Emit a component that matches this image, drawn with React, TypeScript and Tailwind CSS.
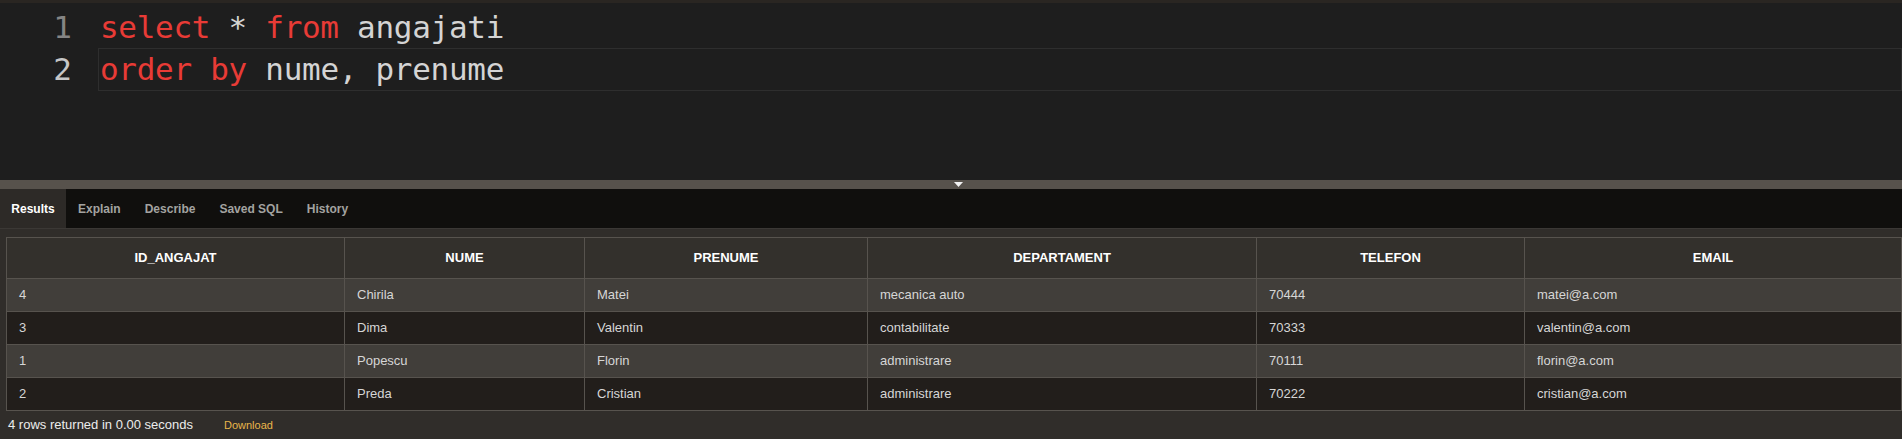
import React from "react";

const cols = [
  { name: "ID_ANGAJAT", w: 338 },
  { name: "NUME", w: 240 },
  { name: "PRENUME", w: 283 },
  { name: "DEPARTAMENT", w: 389 },
  { name: "TELEFON", w: 268 },
  { name: "EMAIL", w: 377 },
];

const rows = [
  ["4", "Chirila", "Matei", "mecanica auto", "70444", "matei@a.com"],
  ["3", "Dima", "Valentin", "contabilitate", "70333", "valentin@a.com"],
  ["1", "Popescu", "Florin", "administrare", "70111", "florin@a.com"],
  ["2", "Preda", "Cristian", "administrare", "70222", "cristian@a.com"],
];

const mono = { fontFamily: '"DejaVu Sans Mono", monospace' };
const sans = { fontFamily: '"Liberation Sans", Arial, sans-serif' };

export default function App() {
  return (
    <div className="w-[1902px] h-[439px] overflow-hidden bg-[#302d2a] flex flex-col" style={sans}>
      {/* Editor */}
      <div className="h-[180px] bg-[#1e1e1e] border-t-[3px] border-[#2a2622] pt-[3px] flex flex-col" style={mono}>
        <div className="h-[42px] flex items-center">
          <div className="w-[98px] pr-[26px] text-right text-[31px] text-[#858585]">1</div>
          <div className="flex-1 text-[31px] tracking-[-0.3px] whitespace-pre pl-[2px]">
            <span className="text-[#e83b36]">select</span>
            <span className="text-[#d4d4d4]"> * </span>
            <span className="text-[#e83b36]">from</span>
            <span className="text-[#d4d4d4]"> angajati</span>
          </div>
        </div>
        <div className="h-[43px] flex items-center">
          <div className="w-[98px] pr-[26px] text-right text-[31px] text-[#c6c6c6]">2</div>
          <div className="flex-1 h-full flex items-center border border-[#2e2e2e] text-[31px] tracking-[-0.3px] whitespace-pre pl-[1px]">
            <span className="text-[#e83b36]">order by</span>
            <span className="text-[#d4d4d4]"> nume, prenume</span>
          </div>
        </div>
      </div>

      {/* Divider */}
      <div className="h-[9px] bg-[#57524c] flex items-center justify-center pl-[14px]">
        <svg width="9" height="5" viewBox="0 0 9 5">
          <path d="M0 0 H9 L4.5 5 Z" fill="#f2f2f2" />
        </svg>
      </div>

      {/* Tabs */}
      <div className="h-[40px] bg-[#100f0d] border-b border-[#3b3835] flex text-[12px] font-bold">
        <div className="w-[66px] bg-[#2d2a27] text-white flex items-center justify-center">Results</div>
        {["Explain", "Describe", "Saved SQL", "History"].map((t) => (
          <div key={t} className="px-[12px] flex items-center text-[#a3a3a0]">{t}</div>
        ))}
      </div>

      {/* Results */}
      <div className="pt-[8px] pl-[6px]">
        <table className="table-fixed border-collapse w-[1895px] text-[13px]">
          <colgroup>
            {cols.map((c) => (
              <col key={c.name} style={{ width: c.w }} />
            ))}
          </colgroup>
          <thead>
            <tr className="h-[41px] bg-[#33302c]">
              {cols.map((c) => (
                <th key={c.name} className="border border-[#57534e] text-white font-bold text-center">
                  {c.name}
                </th>
              ))}
            </tr>
          </thead>
          <tbody>
            {rows.map((r, i) => (
              <tr key={i} className={i % 2 === 0 ? "h-[33px] bg-[#413e3a]" : "h-[33px] bg-[#221e1b]"}>
                {r.map((v, j) => (
                  <td key={j} className="border border-[#57534e] pl-[12px] text-[#d6d6d6]">
                    {v}
                  </td>
                ))}
              </tr>
            ))}
          </tbody>
        </table>
      </div>

      {/* Footer */}
      <div className="h-[28px] flex items-center pl-[8px]">
        <span className="text-[13px] text-[#ececec]">4 rows returned in 0.00 seconds</span>
        <span className="ml-[31px] text-[11px] text-[#e8b64a]">Download</span>
      </div>
    </div>
  );
}
